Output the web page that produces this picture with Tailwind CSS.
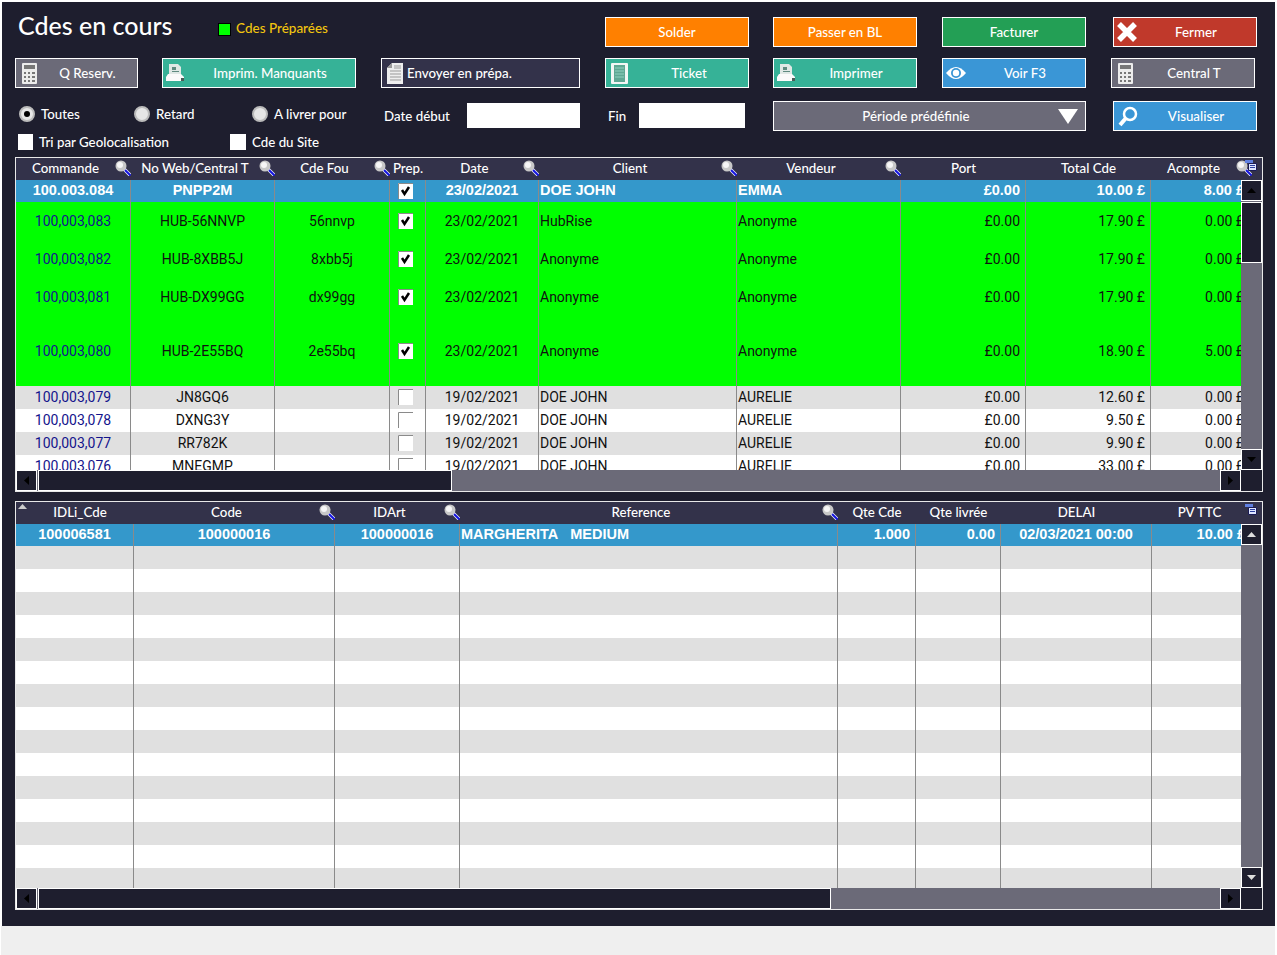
<!DOCTYPE html>
<html lang="fr">

<head>
    <meta charset="UTF-8">
    <title>Cdes en cours</title>
    <script src="https://cdn.jsdelivr.net/npm/@tailwindcss/browser@4"></script>
</head>

<body class="bg-white font-['Lato',sans-serif] text-[13.3px] font-medium text-white overflow-hidden">
    <div class="w-[1277px] h-[955px] pt-[2px] overflow-hidden">
        <main class="ml-[2px] w-[1273px] h-[924px] bg-[#1e1e2e] pl-[13px] pt-[15px] [&_button]:font-medium [&_button]:pt-[2px]">
            <!-- boutons ligne 1 -->
            <div class="flex h-[30px]">
                <div class="w-[590px] flex items-start">
                    <h1 class="ml-[3px] mt-[-8px] w-[200px] text-[25px] leading-[32px] font-medium">Cdes en cours</h1>
                    <span class="w-[13px] h-[13px] mt-[6px] bg-[#00ff00] border border-black"></span>
                    <span class="ml-[5px] mt-[1px] text-[#f1c40f] text-[13.5px] leading-[20px]">Cdes Préparées</span>
                </div>
                <button class="w-[144px] h-[30px] border border-white bg-[#ff8000]">Solder</button>
                <button class="ml-[24px] w-[144px] h-[30px] border border-white bg-[#ff8000]">Passer en BL</button>
                <button class="ml-[25px] w-[144px] h-[30px] border border-white bg-[#239f55]">Facturer</button>
                <button class="relative ml-[27px] w-[144px] h-[30px] border border-white bg-[#c0392b] pl-[22px]">
                    <svg class="absolute left-[2px] top-[3px] w-[22px] h-[22px]" viewBox="0 0 22 22"><path d="M3 3 19 19M19 3 3 19" stroke="white" stroke-width="5.500"/></svg>
                    Fermer
                </button>
            </div>
            <!-- boutons ligne 2 -->
            <div class="flex h-[30px] mt-[11px]">
                <button class="relative w-[123px] h-[30px] border border-white bg-[#6b6a78] pl-[22px]">
                    <svg class="absolute left-[5px] top-[4px] w-[17px] h-[21px]" viewBox="0 0 17 21"><use href="#calc"/></svg>
                    Q Reserv.
                </button>
                <button class="relative ml-[24px] w-[194px] h-[30px] border border-white bg-[#36b297] pl-[22px]">
                    <svg class="absolute left-[3px] top-[5px] w-[20px] h-[18px]" viewBox="0 0 20 18"><use href="#printer"/></svg>
                    Imprim. Manquants
                </button>
                <button class="relative ml-[25px] w-[199px] h-[30px] border border-white bg-[#33324a] text-left pl-[25px]">
                    <svg class="absolute left-[4px] top-[3px] w-[18px] h-[23px]" viewBox="0 0 18 23"><use href="#doc"/></svg>
                    Envoyer en prépa.
                </button>
                <button class="relative ml-[25px] w-[144px] h-[30px] border border-white bg-[#36b297] pl-[24px]">
                    <svg class="absolute left-[5px] top-[4px] w-[17px] h-[21px]" viewBox="0 0 17 21"><use href="#ticket"/></svg>
                    Ticket
                </button>
                <button class="relative ml-[24px] w-[144px] h-[30px] border border-white bg-[#36b297] pl-[22px]">
                    <svg class="absolute left-[3px] top-[5px] w-[20px] h-[18px]" viewBox="0 0 20 18"><use href="#printer"/></svg>
                    Imprimer
                </button>
                <button class="relative ml-[25px] w-[144px] h-[30px] border border-white bg-[#3a96d6] pl-[22px]">
                    <svg class="absolute left-[2px] top-[6px] w-[22px] h-[16px]" viewBox="0 0 22 16"><path d="M1 8Q11-4 21 8 11 20 1 8Z" fill="white"/><circle cx="11" cy="8" r="5" fill="#3a96d6"/><circle cx="11" cy="8" r="3.200" fill="white"/></svg>
                    Voir F3
                </button>
                <button class="relative ml-[25px] w-[144px] h-[30px] border border-white bg-[#6b6a78] pl-[22px]">
                    <svg class="absolute left-[5px] top-[4px] w-[17px] h-[21px]" viewBox="0 0 17 21"><use href="#calc"/></svg>
                    Central T
                </button>
            </div>
            <!-- filtres -->
            <div class="flex items-center h-[30px] mt-[13px]">
                <div class="flex items-center w-[119px] h-[30px] pb-[4px] pl-[4px]">
                    <span class="flex items-center justify-center w-[16px] h-[16px] rounded-full bg-[#e6e6e6] border-2 border-[#bbb]"><span class="w-[6px] h-[6px] rounded-full bg-black"></span></span>
                    <span class="ml-[6px] pt-[2px]">Toutes</span>
                </div>
                <div class="flex items-center w-[118px] h-[30px] pb-[4px]">
                    <span class="w-[16px] h-[16px] rounded-full bg-[#e6e6e6] border-2 border-[#bbb]"></span>
                    <span class="ml-[6px] pt-[2px]">Retard</span>
                </div>
                <div class="flex items-center w-[132px] h-[30px] pb-[4px]">
                    <span class="w-[16px] h-[16px] rounded-full bg-[#e6e6e6] border-2 border-[#bbb]"></span>
                    <span class="ml-[6px] pt-[2px]">A livrer pour</span>
                </div>
                <span class="w-[83px] pt-[2px]">Date début</span>
                <span class="w-[113px] h-[25px] mb-[1px] bg-white"></span>
                <span class="ml-[28px] w-[31px] pt-[2px]">Fin</span>
                <span class="w-[106px] h-[25px] mb-[1px] bg-white"></span>
                <button class="relative ml-[28px] w-[313px] h-[30px] border border-white bg-[#6b6a78] pr-[27px]">
                    Période prédéfinie
                    <svg class="absolute right-[6px] top-[6px] w-[22px] h-[17px]" viewBox="0 0 22 17"><path d="M1 1H21L11 16Z" fill="white"/></svg>
                </button>
                <button class="relative ml-[27px] w-[144px] h-[30px] border border-white bg-[#3a96d6] pl-[22px]">
                    <svg class="absolute left-[3px] top-[3px] w-[22px] h-[22px]" viewBox="0 0 22 22"><circle cx="13" cy="9" r="6" fill="none" stroke="white" stroke-width="2.500"/><path d="M9 13 3 20" stroke="white" stroke-width="4"/></svg>
                    Visualiser
                </button>
            </div>
            <div class="flex items-center h-[16px] mt-[3px]">
                <span class="ml-[3px] w-[15px] h-[16px] bg-white"></span>
                <span class="ml-[6px] w-[191px] pt-[2px]">Tri par Geolocalisation</span>
                <span class="w-[16px] h-[16px] bg-white"></span>
                <span class="ml-[6px] pt-[2px]">Cde du Site</span>
            </div>

            <!-- commandes -->
            <section class="relative mt-[7px] w-[1248px] h-[335px] border border-[#e8e8e8] overflow-hidden">
                <div id="head1" class="h-[22px] bg-[#33324a] grid grid-cols-[115px_144px_115px_36px_113px_198px_164px_125px_125px_101px]"></div>
                <div class="flex">
                    <div id="rows1" class="w-[1225px] h-[290px] overflow-hidden"></div>
                    <div class="w-[21px] h-[290px] bg-[#6b6a78] flex flex-col">
                        <span class="flex items-center justify-center h-[21px] bg-[#1e1e2e] border border-white"><svg class="w-[9px] h-[5px]" viewBox="0 0 9 5"><path d="M0 5H9L4.500 0Z" fill="black"/></svg></span>
                        <span class="mt-[1px] h-[61px] bg-[#1e1e2e] border border-white"></span>
                        <span class="flex items-center justify-center mt-auto h-[21px] bg-[#1e1e2e] border border-white"><svg class="w-[9px] h-[5px]" viewBox="0 0 9 5"><path d="M0 0H9L4.500 5Z" fill="black"/></svg></span>
                    </div>
                </div>
                <div class="flex h-[21px] bg-[#6b6a78]">
                    <span class="flex items-center justify-center w-[21px] bg-[#1e1e2e] border border-white"><svg class="w-[5px] h-[9px]" viewBox="0 0 5 9"><path d="M5 0V9L0 4.500Z" fill="black"/></svg></span>
                    <span class="ml-[1px] w-[414px] bg-[#1e1e2e] border border-white"></span>
                    <span class="flex items-center justify-center ml-auto w-[21px] bg-[#1e1e2e] border border-white"><svg class="w-[5px] h-[9px]" viewBox="0 0 5 9"><path d="M0 0V9L5 4.500Z" fill="black"/></svg></span>
                    <span class="w-[21px] bg-[#1e1e2e]"></span>
                </div>
                <svg class="absolute right-[5px] top-[2px] w-[12px] h-[11px]" viewBox="0 0 12 11"><use href="#cols"/></svg>
            </section>

            <!-- lignes -->
            <section class="relative mt-[9px] w-[1248px] h-[409px] border border-[#e8e8e8] overflow-hidden">
                <div id="head2" class="h-[22px] bg-[#33324a] grid grid-cols-[118px_201px_125px_378px_78px_85px_151px_95px]"></div>
                <div class="flex">
                    <div id="rows2" class="w-[1225px] h-[364px] overflow-hidden"></div>
                    <div class="w-[21px] h-[364px] bg-[#6b6a78] flex flex-col">
                        <span class="flex items-center justify-center h-[21px] bg-[#1e1e2e] border border-white"><svg class="w-[9px] h-[5px]" viewBox="0 0 9 5"><path d="M0 5H9L4.500 0Z" fill="#ddd"/></svg></span>
                        <span class="flex items-center justify-center mt-auto h-[21px] bg-[#1e1e2e] border border-white"><svg class="w-[9px] h-[5px]" viewBox="0 0 9 5"><path d="M0 0H9L4.500 5Z" fill="#ddd"/></svg></span>
                    </div>
                </div>
                <div class="flex h-[21px] bg-[#6b6a78]">
                    <span class="flex items-center justify-center w-[21px] bg-[#1e1e2e] border border-white"><svg class="w-[5px] h-[9px]" viewBox="0 0 5 9"><path d="M5 0V9L0 4.500Z" fill="black"/></svg></span>
                    <span class="ml-[1px] w-[793px] bg-[#1e1e2e] border border-white"></span>
                    <span class="flex items-center justify-center ml-auto w-[21px] bg-[#1e1e2e] border border-white"><svg class="w-[5px] h-[9px]" viewBox="0 0 5 9"><path d="M0 0V9L5 4.500Z" fill="black"/></svg></span>
                    <span class="w-[21px] bg-[#1e1e2e]"></span>
                </div>
                <svg class="absolute left-[2px] top-[2px] w-[9px] h-[5px]" viewBox="0 0 9 5"><path d="M0 5H9L4.500 0Z" fill="#ccc"/></svg>
                <svg class="absolute right-[5px] top-[2px] w-[12px] h-[11px]" viewBox="0 0 12 11"><use href="#cols"/></svg>
            </section>
        </main>
        <div class="ml-[1px] w-[1274px] h-[30px] bg-[#efefef]"></div>
    </div>

    <!-- icones -->
    <svg class="hidden">
        <symbol id="calc" viewBox="0 0 17 21">
            <rect x="1" y="0" width="15" height="21" rx="1" fill="#ececec"/>
            <rect x="3" y="2" width="11" height="4" fill="#777"/>
            <path d="M3 9h2v2H3zM7 9h2v2H7zM11 9h3v2h-3zM3 13h2v2H3zM7 13h2v2H7zM11 13h3v2h-3zM3 17h2v2H3zM7 17h2v2H7zM11 17h3v2h-3z" fill="#777"/>
        </symbol>
        <symbol id="printer" viewBox="0 0 20 18">
            <path d="M3 0h9l3 3v8H3z" fill="#dfe8e5"/>
            <path d="M6 3h4v3H6zM6 7h7v1H6z" fill="#5f8a80"/>
            <path d="M2 10h13l3 3v4H0v-4z" fill="#fafafa"/>
            <path d="M15 14h3v3h-3z" fill="#4a5a55"/>
        </symbol>
        <symbol id="doc" viewBox="0 0 18 23">
            <path d="M6 1h11v21H1V6z" fill="#eee"/>
            <path d="M6 1v5H1z" fill="#999"/>
            <path d="M4 9h11M4 12h11M4 15h11M4 18h11M8 4h7M8 6h7" stroke="#999" stroke-width="1"/>
        </symbol>
        <symbol id="ticket" viewBox="0 0 17 21">
            <rect x="0" y="0" width="17" height="21" rx="1" fill="#f2f7f5"/>
            <rect x="3" y="2" width="11" height="17" fill="#5fa894"/>
            <path d="M4 5h9M4 8h9M4 11h9M4 14h9" stroke="#8fd0be"/>
        </symbol>
        <symbol id="cols" viewBox="0 0 12 11">
            <path d="M0 0H8V3H0z" fill="#5f7fe0"/>
            <path d="M3.500 3.500H11.500V10.500H3.500z" fill="#dfe6ff" stroke="#1b1b55"/>
            <path d="M5 5.500H10M5 7.500H10" stroke="#2b3f9f"/>
        </symbol>
        <symbol id="loupe" viewBox="0 0 16 16">
            <path d="M9 9 15 15" stroke="#f0f0ff" stroke-width="3.500"/>
            <path d="M10 10 15.500 15.500" stroke="#1414e0" stroke-width="2"/>
            <circle cx="6" cy="6" r="5.500" fill="#c8c8c8"/>
            <circle cx="5" cy="5" r="3" fill="#f6f6f6"/>
        </symbol>
    </svg>

    <script>
        const loupe = '<svg class="self-start mt-[2px] w-[16px] h-[16px] shrink-0" viewBox="0 0 16 16"><use href="#loupe"/></svg>';

        const renderHead = (id, cols) => {
            document.getElementById(id).innerHTML = cols.map(([label, search, extra]) => `
                <div class="flex items-center min-w-0 ${extra || ""}">
                    <span class="flex-1 pb-[3px] text-center leading-[20px] whitespace-nowrap">${label}</span>
                    ${search ? loupe : ""}
                </div>`).join("");
        };

        const tick = '<path d="M4 7 6.500 11 11 4" fill="none" stroke="black" stroke-width="2.500"/>';
        const checkbox = (checked) => `
            <svg class="block mr-[4px] w-[15px] h-[16px]" viewBox="0 0 15 16">
                <rect width="15" height="16" fill="white"/>
                <path d="M.5 16V.5H15" fill="none" stroke="#8a8a8a"/>
                ${checked ? tick : ""}
            </svg>`;

        const alignClass = { c: "justify-center", k: "justify-center", l: "justify-start pl-[1px]", r: "justify-end pr-[5px]" };

        const renderRows = (id, grid, rows, aligns) => {
            document.getElementById(id).innerHTML = rows.map((row) => {
                const cells = row.cells.map((text, i) => {
                    const isCheck = aligns[i] === "k";
                    const content = isCheck ? checkbox(text) : text;
                    const color = i === 0 && row.link ? "text-[#14148c]" : "";
                    // le texte des lignes vertes reste centre, les autres remontent d'un pixel
                    const shift = isCheck || row.shift ? "block mb-[1px]" : "";
                    return `<div class="flex items-center ${alignClass[aligns[i]]} ${color} border-r border-[#8a8a8a] whitespace-nowrap overflow-hidden"><span class="${shift}">${content}</span></div>`;
                }).join("");
                return `<div class="grid ${grid} ${row.cls}" style="height:${row.h}px">${cells}</div>`;
            }).join("");
        };

        renderHead("head1", [["Commande", 1], ["No Web/Central T", 1], ["Cde Fou", 1], ["Prep."], ["Date", 1], ["Client", 1], ["Vendeur", 1], ["Port"], ["Total Cde"], ["Acompte", 1]]);
        renderHead("head2", [["IDLi_Cde", 0, "pl-[10px]"], ["Code", 1], ["IDArt", 1], ["Reference", 1], ["Qte Cde"], ["Qte livrée"], ["DELAI"], ["PV TTC"]]);

        const selected = "bg-[#3498cb] text-white font-['Liberation_Sans',sans-serif] font-bold text-[14.5px]";
        const body = "text-[#111] font-['Roboto',sans-serif] font-normal text-[14px]";
        const green = `bg-[#00ff00] ${body}`;
        const grey = `bg-[#e0e0e0] ${body}`;
        const plain = `bg-white ${body}`;

        const grid1 = "grid-cols-[115px_144px_115px_36px_113px_198px_164px_125px_125px_99px]";
        const line = (h, cls, no, web, fou, prep, date, client, vendeur, total, acompte) => ({
            h, cls, link: cls !== selected, shift: cls !== green,
            cells: [no, web, fou, prep, date, client, vendeur, "£0.00", total, acompte],
        });

        renderRows("rows1", grid1, [
            line(22, selected, "100.003.084", "PNPP2M", "", true, "23/02/2021", "DOE JOHN", "EMMA", "10.00 £", "8.00 £"),
            line(38, green, "100,003,083", "HUB-56NNVP", "56nnvp", true, "23/02/2021", "HubRise", "Anonyme", "17.90 £", "0.00 £"),
            line(38, green, "100,003,082", "HUB-8XBB5J", "8xbb5j", true, "23/02/2021", "Anonyme", "Anonyme", "17.90 £", "0.00 £"),
            line(38, green, "100,003,081", "HUB-DX99GG", "dx99gg", true, "23/02/2021", "Anonyme", "Anonyme", "17.90 £", "0.00 £"),
            line(70, green, "100,003,080", "HUB-2E55BQ", "2e55bq", true, "23/02/2021", "Anonyme", "Anonyme", "18.90 £", "5.00 £"),
            line(23, grey, "100,003,079", "JN8GQ6", "", false, "19/02/2021", "DOE JOHN", "AURELIE", "12.60 £", "0.00 £"),
            line(23, plain, "100,003,078", "DXNG3Y", "", false, "19/02/2021", "DOE JOHN", "AURELIE", "9.50 £", "0.00 £"),
            line(23, grey, "100,003,077", "RR782K", "", false, "19/02/2021", "DOE JOHN", "AURELIE", "9.90 £", "0.00 £"),
            line(23, plain, "100,003,076", "MNEGMP", "", false, "19/02/2021", "DOE JOHN", "AURELIE", "33.00 £", "0.00 £"),
        ], ["c", "c", "c", "k", "c", "l", "l", "r", "r", "r"]);

        const grid2 = "grid-cols-[118px_201px_125px_378px_78px_85px_151px_99px]";
        const blanks = Array.from({ length: 15 }, (_, i) => ({
            h: 23, cls: i % 2 === 0 ? grey : plain, shift: false, cells: ["", "", "", "", "", "", "", ""],
        }));
        renderRows("rows2", grid2, [
            { h: 22, cls: selected, shift: true, cells: ["100006581", "100000016", "100000016", "MARGHERITA&nbsp;&nbsp; MEDIUM", "1.000", "0.00", "02/03/2021 00:00", "10.00 £"] },
            ...blanks,
        ], ["c", "c", "c", "l", "r", "r", "c", "r"]);
    </script>
</body>

</html>
